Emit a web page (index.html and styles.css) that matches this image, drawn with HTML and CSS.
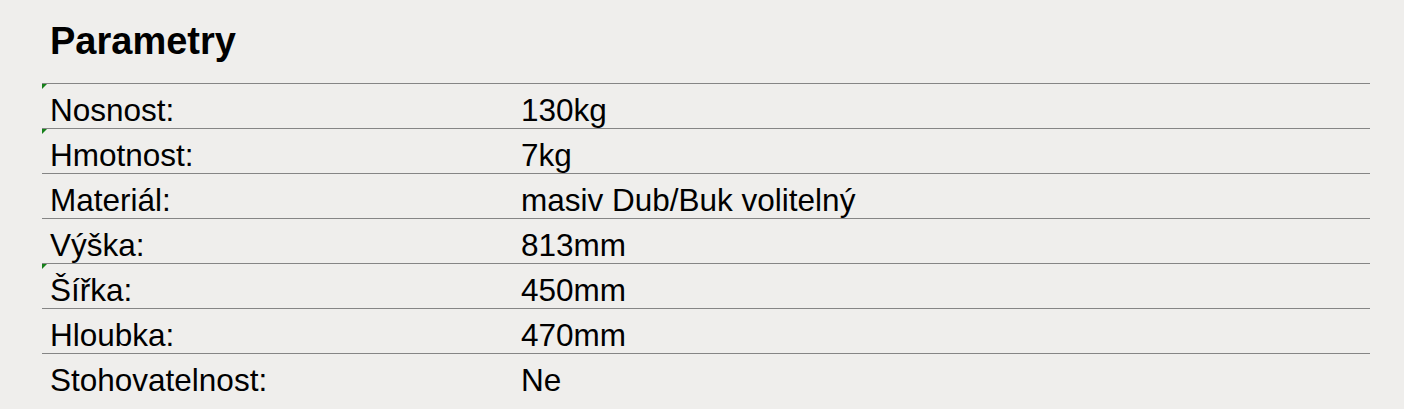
FILE: index.html
```html
<!DOCTYPE html>
<html lang="cs">
<head>
  <meta charset="UTF-8" />
  <meta name="viewport" content="width=device-width, initial-scale=1.0" />
  <title>Parametry</title>
  <link rel="stylesheet" href="styles.css">
</head>
<body>
  <div class="container">
    <h2 class="title">Parametry</h2>
    <table class="params">
      <colgroup>
        <col class="col-name">
        <col>
      </colgroup>
      <tr><td class="name marked">Nosnost:</td><td>130kg</td></tr>
      <tr><td class="name marked">Hmotnost:</td><td>7kg</td></tr>
      <tr><td class="name">Materiál:</td><td>masiv Dub/Buk volitelný</td></tr>
      <tr><td class="name">Výška:</td><td>813mm</td></tr>
      <tr><td class="name marked">Šířka:</td><td>450mm</td></tr>
      <tr><td class="name">Hloubka:</td><td>470mm</td></tr>
      <tr><td class="name">Stohovatelnost:</td><td>Ne</td></tr>
    </table>
  </div>
</body>
</html>
```

FILE: styles.css
```css
body {
  margin: 0;
  background: #efeeec;
  color: #000;
  font-family: "Liberation Sans", Arial, sans-serif;
}

.container {
  width: 1328px;
  margin-left: 42px;
}

.title {
  margin: 19px 0 20px;
  padding-left: 8px;
  font-size: 38px;
  line-height: 44px;
  font-weight: bold;
}

.params {
  width: 100%;
  table-layout: fixed;
  border-collapse: separate;
  border-spacing: 0;
  font-size: 31.5px;
}

.col-name {
  width: 471px;
}

.params td {
  position: relative;
  border-top: 1px solid #858585;
  padding: 8px 8px 0;
  line-height: 36px;
  white-space: nowrap;
}

/* little green corner mark */
.params td.marked::before {
  content: "";
  position: absolute;
  top: 0;
  left: 0;
  border-top: 5px solid #16801a;
  border-right: 5px solid transparent;
}
```
